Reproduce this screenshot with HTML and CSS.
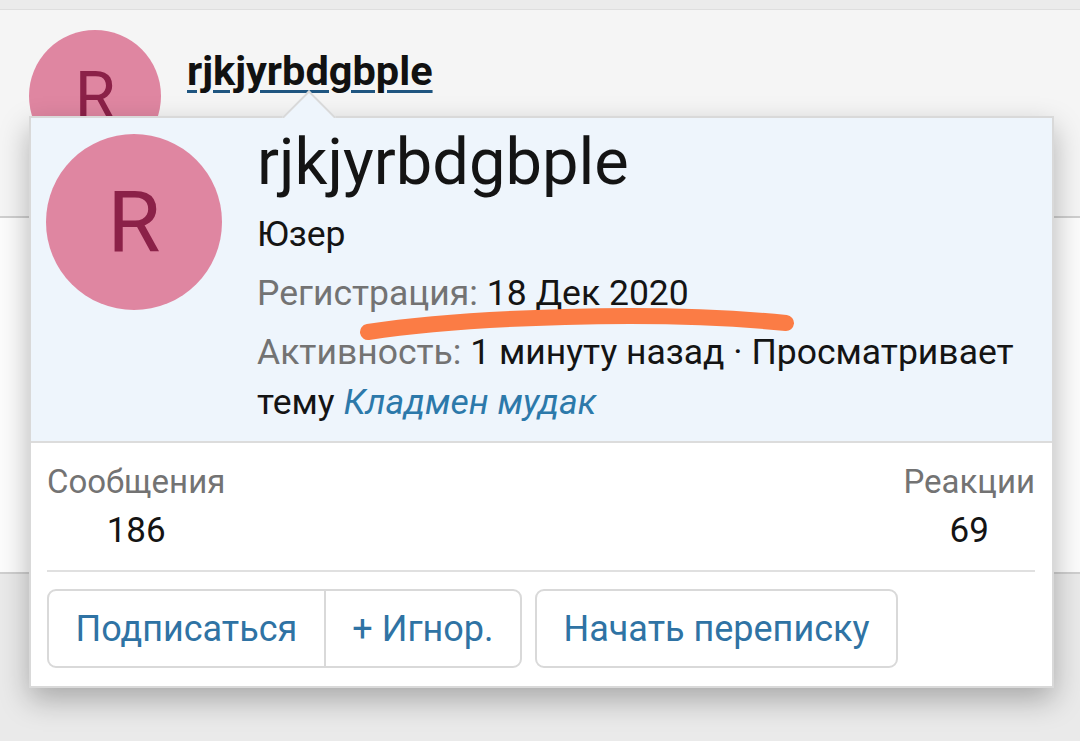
FILE: index.html
```html
<!DOCTYPE html>
<html lang="ru">
<head>
<meta charset="utf-8">
<link rel="stylesheet" href="styles.css">
</head>
<body>
<div class="page">
  <div class="topband"></div>
  <div class="post">
    <div class="post-avatar">R</div>
    <div class="post-meta">
      <a class="post-user" href="#">rjkjyrbdgbple</a>
      <div class="post-title">Юзер</div>
    </div>
  </div>
  <div class="post-body"></div>
  <div class="rest"></div>

  <div class="tooltip">
    <div class="tip-arrow"></div>
    <div class="tip-head">
      <div class="tip-avatar">R</div>
      <div class="tip-info">
        <div class="tip-name">rjkjyrbdgbple</div>
        <div class="tip-line">Юзер</div>
        <div class="tip-line"><span class="lbl">Регистрация:</span> 18 Дек 2020</div>
        <div class="tip-line"><span class="lbl">Активность:</span> 1 минуту назад · Просматривает тему <a class="topic" href="#">Кладмен мудак</a></div>
      </div>
    </div>
    <div class="tip-stats">
      <div class="stat">
        <div class="stat-lbl">Сообщения</div>
        <div class="stat-val">186</div>
      </div>
      <div class="stat">
        <div class="stat-lbl">Реакции</div>
        <div class="stat-val">69</div>
      </div>
    </div>
    <div class="tip-actions">
      <div class="btn-group">
        <a class="btn" href="#">Подписаться</a>
        <a class="btn" href="#">+ Игнор.</a>
      </div>
      <a class="btn single" href="#">Начать переписку</a>
    </div>
    <svg class="scribble" width="460" height="40" viewBox="0 0 460 40">
      <path d="M12 28 C 110 13, 300 6, 430 19" fill="none" stroke="#fb7c45" stroke-width="16" stroke-linecap="round"/>
    </svg>
  </div>
</div>
</body>
</html>
```
FILE: styles.css
```css
* { box-sizing: border-box; }
html, body { margin: 0; padding: 0; }
body {
  width: 1080px;
  height: 741px;
  overflow: hidden;
  background: #e9e9e9;
  font-family: Roboto, "Noto Sans", sans-serif;
}
.page { position: relative; width: 1080px; height: 741px; }
.topband {
  height: 10px;
  background: #ebebeb;
  border-bottom: 1px solid #dedede;
}
.post {
  height: 208px;
  background: #f5f5f5;
  border-bottom: 2px solid #cfcfcf;
  display: flex;
  padding: 20px 0 0 29px;
  gap: 26px;
}
.post-avatar {
  width: 132px;
  height: 132px;
  border-radius: 50%;
  background: #df86a1;
  color: #8b2148;
  font-size: 66px;
  display: flex;
  align-items: center;
  justify-content: center;
}
.post-meta { padding-top: 16px; }
.post-user {
  font-size: 41.5px;
  font-weight: 700;
  color: #111;
  text-decoration: underline;
  text-decoration-color: #1f5580;
  text-decoration-thickness: 3px;
  text-underline-offset: 5px;
}
.post-title { font-size: 34px; margin-top: 14px; color: #222; }
.post-body {
  height: 356px;
  background: #fcfcfc;
  border-bottom: 2px solid #cfcfcf;
}
.rest { height: 167px; background: #eaeaea; }

.tooltip {
  position: absolute;
  left: 29px;
  top: 116px;
  width: 1025px;
  height: 572px;
  background: #fff;
  border: 2px solid #d9d9d9;
  box-shadow: 0 12px 28px rgba(0,0,0,0.28);
  display: flex;
  flex-direction: column;
}
.tip-arrow {
  position: absolute;
  left: 259px;
  top: -20px;
  width: 38px;
  height: 38px;
  background: #eef5fc;
  border-left: 2px solid #d9d9d9;
  border-top: 2px solid #d9d9d9;
  transform: rotate(45deg);
}
.tip-head {
  position: relative;
  background: #eef5fc;
  border-bottom: 2px solid #dcdcdc;
  height: 325px;
  display: flex;
  gap: 35px;
  padding: 16px 15px 0 15px;
}
.tip-avatar {
  flex: none;
  width: 176px;
  height: 176px;
  border-radius: 50%;
  background: #df86a1;
  color: #8b2148;
  font-size: 86px;
  display: flex;
  align-items: center;
  justify-content: center;
}
.tip-info { color: #141414; margin-top: -4px; }
.tip-name { font-size: 65px; line-height: 64px; margin-bottom: 15px; }
.tip-line { font-size: 35.5px; line-height: 50px; margin-bottom: 9px; }
.lbl { color: #737373; }
.topic { color: #2c79aa; font-style: italic; text-decoration: none; }

.tip-stats {
  display: flex;
  justify-content: space-between;
  margin: 0 17px 0 16px;
  padding: 19px 0 14px;
  border-bottom: 2px solid #e0e0e0;
}
.stat { display: flex; flex-direction: column; align-items: center; }
.stat-lbl { font-size: 33px; line-height: 40px; color: #737373; }
.stat-val { font-size: 35px; line-height: 50px; margin-top: 4px; color: #141414; }

.tip-actions {
  display: flex;
  gap: 13px;
  padding: 17px 16px 0;
}
.btn-group {
  display: flex;
  border: 2px solid #d9d9d9;
  border-radius: 9px;
  overflow: hidden;
}
.btn {
  display: flex;
  align-items: center;
  justify-content: center;
  height: 79px;
  font-size: 36px;
  color: #2f73a4;
  text-decoration: none;
  padding: 0 26.5px;
}
.btn-group .btn { height: 75px; }
.btn-group .btn + .btn { border-left: 2px solid #d9d9d9; }
.btn.single {
  border: 2px solid #d9d9d9;
  border-radius: 9px;
}
.scribble {
  position: absolute;
  left: 325px;
  top: 186px;
}
```
